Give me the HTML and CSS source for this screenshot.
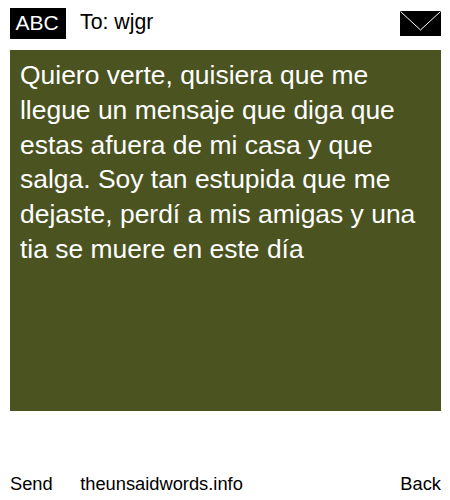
FILE: index.html
```html
<!DOCTYPE html>
<html lang="es">
<head>
<meta charset="utf-8">
<title>theunsaidwords.info</title>
<link rel="stylesheet" href="styles.css">
</head>
<body>
<div class="phone">
  <header class="top">
    <span class="mode">ABC</span>
    <span class="to">To: wjgr</span>
    <svg class="env" width="41" height="25" viewBox="0 0 41 25">
      <rect width="41" height="25" fill="#000"/>
      <path d="M0.5 0.5L20.5 19L40.5 0.5" fill="none" stroke="#fff" stroke-width="1"/>
    </svg>
  </header>
  <main class="msg">Quiero verte, quisiera que me llegue un mensaje que diga que estas afuera de mi casa y que salga. Soy tan estupida que me dejaste, perdí a mis amigas y una tia se muere en este día</main>
  <footer class="bottom">
    <span class="send">Send</span>
    <span class="site">theunsaidwords.info</span>
    <span class="back">Back</span>
  </footer>
</div>
</body>
</html>
```

FILE: styles.css
```css
html, body { margin: 0; padding: 0; background: #fff; }
.phone {
  width: 450px;
  height: 500px;
  box-sizing: border-box;
  padding: 8px 9px 0 10px;
  font-family: "Liberation Sans", Arial, sans-serif;
  color: #000;
  display: flex;
  flex-direction: column;
}
.top {
  display: flex;
  align-items: center;
  height: 31px;
  font-size: 18px;
}
.mode {
  background: #000;
  color: #fff;
  width: 56px;
  height: 31px;
  box-sizing: border-box;
  padding-right: 2px;
  line-height: 30px;
  text-align: center;
  font-size: 21px;
}
.to { margin-left: 14px; font-size: 21.3px; padding-bottom: 2px; }
.env { margin-left: auto; margin-top: -1px; display: block; }
.msg {
  margin-top: 11px;
  height: 361px;
  box-sizing: border-box;
  background: #4b5320;
  color: #fff;
  font-size: 26.45px;
  line-height: 34.8px;
  padding: 8px 10px 0 10px;
}
.bottom {
  display: flex;
  margin-top: 63px;
  font-size: 18.3px;
  line-height: 20px;
}
.site { margin-left: 27.5px; }
.back { margin-left: auto; }
```
